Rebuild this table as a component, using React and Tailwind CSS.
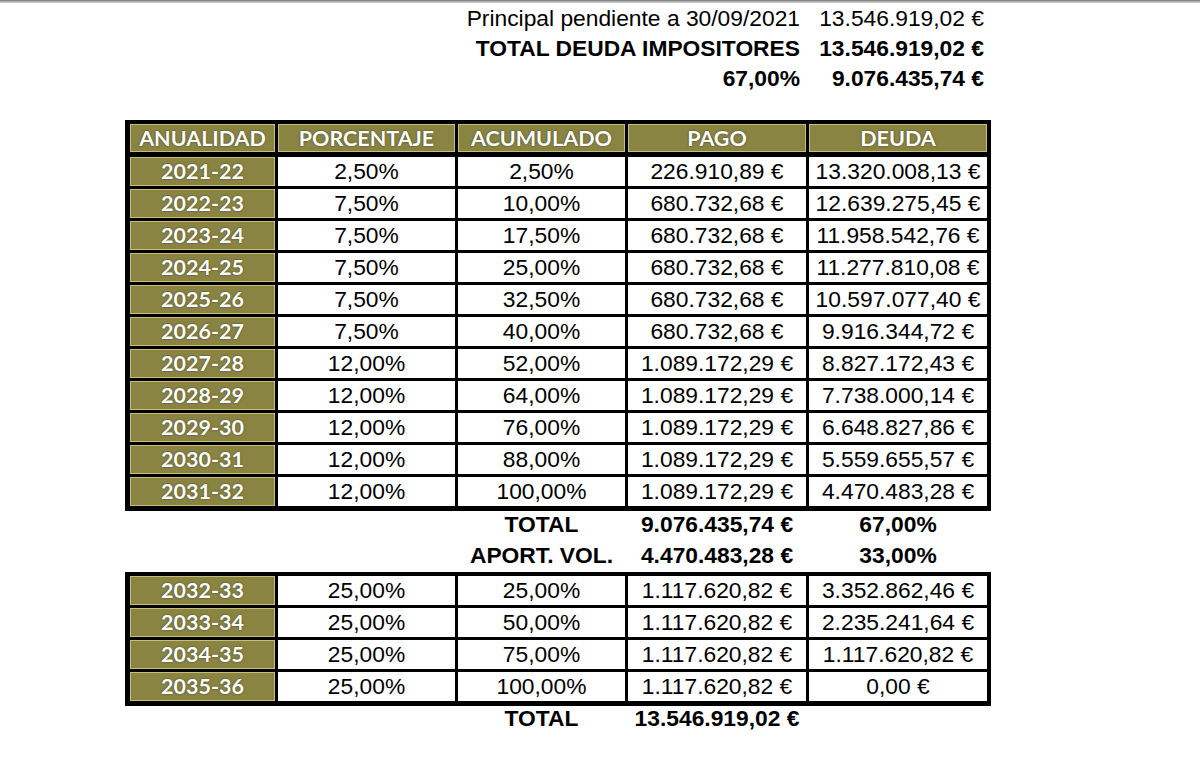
import React from 'react';

const cols = 'grid grid-cols-[145px_177px_167px_178px_178px] gap-x-[3px]';
const olive = 'bg-[#8a8443] border border-[#c6bf78] text-white font-bold flex items-center justify-center [text-shadow:0_0_2px_#3a3a20]';
const lato = { fontFamily: 'Lato, "Open Sans", sans-serif' };

const first = [
  ['2021-22', '2,50%', '2,50%', '226.910,89 €', '13.320.008,13 €'],
  ['2022-23', '7,50%', '10,00%', '680.732,68 €', '12.639.275,45 €'],
  ['2023-24', '7,50%', '17,50%', '680.732,68 €', '11.958.542,76 €'],
  ['2024-25', '7,50%', '25,00%', '680.732,68 €', '11.277.810,08 €'],
  ['2025-26', '7,50%', '32,50%', '680.732,68 €', '10.597.077,40 €'],
  ['2026-27', '7,50%', '40,00%', '680.732,68 €', '9.916.344,72 €'],
  ['2027-28', '12,00%', '52,00%', '1.089.172,29 €', '8.827.172,43 €'],
  ['2028-29', '12,00%', '64,00%', '1.089.172,29 €', '7.738.000,14 €'],
  ['2029-30', '12,00%', '76,00%', '1.089.172,29 €', '6.648.827,86 €'],
  ['2030-31', '12,00%', '88,00%', '1.089.172,29 €', '5.559.655,57 €'],
  ['2031-32', '12,00%', '100,00%', '1.089.172,29 €', '4.470.483,28 €'],
];

const second = [
  ['2032-33', '25,00%', '25,00%', '1.117.620,82 €', '3.352.862,46 €'],
  ['2033-34', '25,00%', '50,00%', '1.117.620,82 €', '2.235.241,64 €'],
  ['2034-35', '25,00%', '75,00%', '1.117.620,82 €', '1.117.620,82 €'],
  ['2035-36', '25,00%', '100,00%', '1.117.620,82 €', '0,00 €'],
];

function Rows({ rows }) {
  return (
    <div className={`${cols} gap-y-[3px]`}>
      {rows.map((r) => (
        <React.Fragment key={r[0]}>
          <div className={`${olive} h-[29px] text-[21.5px]`} style={lato}>{r[0]}</div>
          {r.slice(1).map((v, i) => (
            <div key={i} className="bg-white h-[29px] flex items-center justify-center text-[22.8px] text-black">
              {v}
            </div>
          ))}
        </React.Fragment>
      ))}
    </div>
  );
}

export default function App() {
  return (
    <div className="w-[1200px] h-[767px] bg-white overflow-hidden" style={{ fontFamily: '"Liberation Sans", Arial, sans-serif' }}>
      <div className="h-[3px] bg-linear-to-b from-[#7a7a7a] to-[#dadada]" />

      <div className="ml-[125px] w-[866px]">
        {/* Top summary */}
        <div className="pr-[7px] text-[22.8px] leading-[30px] text-black">
          <div className="flex justify-end">
            <span>Principal pendiente a 30/09/2021</span>
            <span className="w-[184px] text-right">13.546.919,02 €</span>
          </div>
          <div className="flex justify-end font-bold">
            <span>TOTAL DEUDA IMPOSITORES</span>
            <span className="w-[184px] text-right">13.546.919,02 €</span>
          </div>
          <div className="flex justify-end font-bold">
            <span>67,00%</span>
            <span className="w-[184px] text-right">9.076.435,74 €</span>
          </div>
        </div>

        {/* First table */}
        <div className="mt-[27px] bg-black pt-[4px] pb-[5px] pl-[5px] pr-[4px] flex flex-col gap-[5px]">
          <div className={cols}>
            {['ANUALIDAD', 'PORCENTAJE', 'ACUMULADO', 'PAGO', 'DEUDA'].map((h) => (
              <div key={h} className={`${olive} h-[28px] text-[21.5px]`} style={lato}>{h}</div>
            ))}
          </div>
          <Rows rows={first} />
        </div>

        {/* Totals */}
        <div className={`${cols} pl-[5px] font-bold text-[22.8px] text-black`}>
          <div className="col-start-3 h-[27px] flex items-center justify-center">TOTAL</div>
          <div className="h-[27px] flex items-center justify-center">9.076.435,74 €</div>
          <div className="h-[27px] flex items-center justify-center">67,00%</div>
          <div className="col-start-3 h-[34px] flex items-center justify-center">APORT. VOL.</div>
          <div className="h-[34px] flex items-center justify-center">4.470.483,28 €</div>
          <div className="h-[34px] flex items-center justify-center">33,00%</div>
        </div>

        {/* Second table */}
        <div className="bg-black pt-[4px] pb-[5px] pl-[5px] pr-[4px]">
          <Rows rows={second} />
        </div>

        <div className={`${cols} pl-[5px] font-bold text-[22.8px] text-black`}>
          <div className="col-start-3 h-[24px] flex items-center justify-center">TOTAL</div>
          <div className="h-[24px] flex items-center justify-center">13.546.919,02 €</div>
        </div>
      </div>
    </div>
  );
}
